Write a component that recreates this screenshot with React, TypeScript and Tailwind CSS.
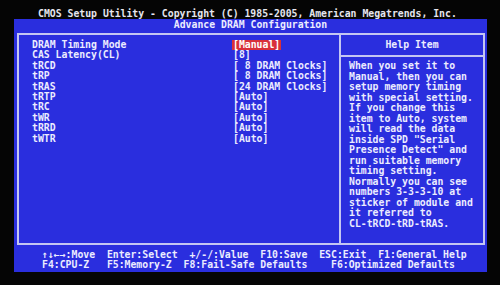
import React from "react";

const rows: [string, string][] = [
  ["DRAM Timing Mode", "[Manual]"],
  ["CAS Latency(CL)", "[8]"],
  ["tRCD", "[ 8 DRAM Clocks]"],
  ["tRP", "[ 8 DRAM Clocks]"],
  ["tRAS", "[24 DRAM Clocks]"],
  ["tRTP", "[Auto]"],
  ["tRC", "[Auto]"],
  ["tWR", "[Auto]"],
  ["tRRD", "[Auto]"],
  ["tWTR", "[Auto]"],
];

const help = [
  "When you set it to",
  "Manual, then you can",
  "setup memory timing",
  "with special setting.",
  "If you change this",
  "item to Auto, system",
  "will read the data",
  'inside SPD "Serial',
  'Presence Detect" and',
  "run suitable memory",
  "timing setting.",
  "Normally you can see",
  "numbers 3-3-3-10 at",
  "sticker of module and",
  "it referred to",
  "CL-tRCD-tRD-tRAS.",
];

export default function App() {
  return (
    <div
      className="w-[500px] h-[285px] bg-[#050505] overflow-hidden flex flex-col font-bold text-[9.8px] leading-[10.4px] whitespace-pre"
      style={{ fontFamily: '"DejaVu Sans Mono", "Liberation Mono", monospace' }}
    >
      <div className="h-[19px] pt-[9px] pl-[38px] text-[#e6e6ee] leading-[10px]">
        CMOS Setup Utility - Copyright (C) 1985-2005, American Megatrends, Inc.
      </div>
      <div className="ml-[14px] w-[473px] h-[253px] bg-[#2a2ede] flex flex-col text-[#ececff]">
        <div className="h-[14px] pt-[1px] text-center leading-[10px]">Advance DRAM Configuration</div>
        <div className="ml-[3px] mr-[2px] h-[212px] border-2 border-[#c4c6f2] flex">
          <div className="w-[322px] border-r-2 border-[#c4c6f2] pt-[5px] pl-[13px] flex flex-col">
            {rows.map(([l, v]) => (
              <div key={l} className="flex h-[10.4px]">
                <div className="w-[201px]">{l}</div>
                <div className={v === "[Manual]" ? "bg-[#d8303a] text-white px-[1px] -ml-[1px]" : ""}>{v}</div>
              </div>
            ))}
          </div>
          <div className="flex-1 flex flex-col">
            <div className="h-[22px] border-b-2 border-[#c4c6f2] text-center pt-[5px]">Help Item</div>
            <div className="pt-[4px] pl-[8px] flex flex-col">
              {help.map((h) => (
                <div key={h} className="h-[10.5px]">{h}</div>
              ))}
            </div>
          </div>
        </div>
        <div className="pt-[5px] pl-[28px] flex flex-col leading-[10.3px]">
          <div>{"\u2191\u2193\u2190\u2192:Move  Enter:Select  +/-/:Value  F10:Save  ESC:Exit  F1:General Help"}</div>
          <div>{"F4:CPU-Z   F5:Memory-Z  F8:Fail-Safe Defaults    F6:Optimized Defaults"}</div>
        </div>
      </div>
    </div>
  );
}
